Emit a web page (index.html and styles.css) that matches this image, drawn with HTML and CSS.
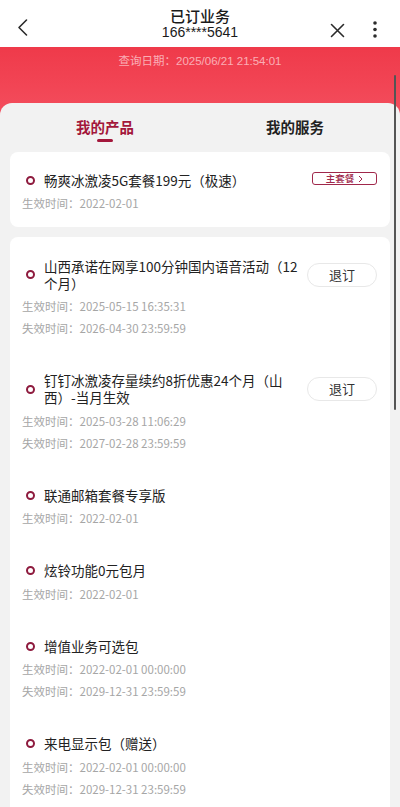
FILE: index.html
```html
<!DOCTYPE html>
<html lang="zh-CN">
<head>
<meta charset="utf-8">
<title>已订业务</title>
<link rel="stylesheet" href="styles.css">
</head>
<body>
<div class="app">
  <header class="nav">
    <div class="nav-left">
      <svg width="80" height="47" viewBox="0 0 80 47"><polyline points="26.5,20 19,27.5 26.5,35" fill="none" stroke="#2b2b2b" stroke-width="1.6" stroke-linecap="round" stroke-linejoin="round"/></svg>
    </div>
    <div class="nav-center">
      <div class="nav-title">已订业务</div>
      <div class="nav-phone">166****5641</div>
    </div>
    <div class="nav-right">
      <svg width="80" height="47" viewBox="0 0 80 47"><path d="M11.5 24.5 L23.5 36.5 M23.5 24.5 L11.5 36.5" stroke="#2b2b2b" stroke-width="1.6" stroke-linecap="round"/><circle cx="55" cy="23" r="1.8" fill="#2b2b2b"/><circle cx="55" cy="29.5" r="1.8" fill="#2b2b2b"/><circle cx="55" cy="36" r="1.8" fill="#2b2b2b"/></svg>
    </div>
  </header>

  <section class="hero">
    <div class="query-date">查询日期：2025/06/21 21:54:01</div>
    <div class="panel">
      <div class="tabs">
        <div class="tab active"><span class="tab-label">我的产品</span><span class="tab-bar"></span></div>
        <div class="tab"><span class="tab-label">我的服务</span></div>
      </div>

      <div class="card card-main">
        <div class="item">
          <div class="item-row">
            <span class="dot"></span>
            <span class="item-title">畅爽冰激凌5G套餐199元（极速）</span>
            <span class="tag">主套餐<svg width="5" height="8" viewBox="0 0 5 8"><polyline points="1,1 4,4 1,7" fill="none" stroke="#a0284b" stroke-width="1"/></svg></span>
          </div>
          <div class="dates"><div class="date">生效时间：2022-02-01</div></div>
        </div>
      </div>

      <div class="card card-list">
        <div class="item">
          <div class="item-row">
            <span class="dot"></span>
            <span class="item-title">山西承诺在网享100分钟国内语音活动（12个月）</span>
            <span class="btn">退订</span>
          </div>
          <div class="dates">
            <div class="date">生效时间：2025-05-15 16:35:31</div>
            <div class="date">失效时间：2026-04-30 23:59:59</div>
          </div>
        </div>
        <div class="item">
          <div class="item-row">
            <span class="dot"></span>
            <span class="item-title">钉钉冰激凌存量续约8折优惠24个月（山西）-当月生效</span>
            <span class="btn">退订</span>
          </div>
          <div class="dates">
            <div class="date">生效时间：2025-03-28 11:06:29</div>
            <div class="date">失效时间：2027-02-28 23:59:59</div>
          </div>
        </div>
        <div class="item">
          <div class="item-row">
            <span class="dot"></span>
            <span class="item-title">联通邮箱套餐专享版</span>
          </div>
          <div class="dates"><div class="date">生效时间：2022-02-01</div></div>
        </div>
        <div class="item">
          <div class="item-row">
            <span class="dot"></span>
            <span class="item-title">炫铃功能0元包月</span>
          </div>
          <div class="dates"><div class="date">生效时间：2022-02-01</div></div>
        </div>
        <div class="item">
          <div class="item-row">
            <span class="dot"></span>
            <span class="item-title">增值业务可选包</span>
          </div>
          <div class="dates">
            <div class="date">生效时间：2022-02-01 00:00:00</div>
            <div class="date">失效时间：2029-12-31 23:59:59</div>
          </div>
        </div>
        <div class="item">
          <div class="item-row">
            <span class="dot"></span>
            <span class="item-title">来电显示包（赠送）</span>
          </div>
          <div class="dates">
            <div class="date">生效时间：2022-02-01 00:00:00</div>
            <div class="date">失效时间：2029-12-31 23:59:59</div>
          </div>
        </div>
      </div>
    </div>
  </section>
  <div class="scroll-thumb"></div>
</div>
</body>
</html>
```

FILE: styles.css
```css
html, body {
  margin: 0;
  padding: 0;
  overflow: hidden;
  background: #f2f2f2;
}
body {
  font-family: "Noto Sans CJK SC", "Liberation Sans", sans-serif;
  color: #222;
  -webkit-font-smoothing: antialiased;
}
.app {
  position: relative;
  width: 400px;
  height: 807px;
  overflow: hidden;
}
.nav {
  display: flex;
  height: 47px;
  background: #fff;
}
.nav-left, .nav-right {
  width: 80px;
  flex: none;
}
.nav-left svg, .nav-right svg { display: block; }
.nav-center {
  flex: 1;
  text-align: center;
  padding-top: 7px;
}
.nav-title {
  font-size: 15px;
  line-height: 18px;
  font-weight: 500;
  color: #1a1a1a;
}
.nav-phone {
  font-family: "Liberation Sans", "Noto Sans CJK SC", sans-serif;
  font-size: 14px;
  line-height: 15px;
  color: #1a1a1a;
}
.hero {
  background: linear-gradient(180deg, #ef3a4a 0px, #f24555 40px, #f34f5e 70px) no-repeat;
  background-size: 100% 80px;
  padding-top: 7px;
}
.query-date {
  text-align: center;
  font-family: "Liberation Sans", "Noto Sans CJK SC", sans-serif;
  font-size: 11.5px;
  line-height: 14px;
  color: rgba(255, 225, 228, 0.7);
  margin-bottom: 35px;
}
.panel {
  background: #f2f2f2;
  border-radius: 12px 12px 0 0;
  padding-bottom: 40px;
}
.tabs {
  display: flex;
  margin: 0 10px;
  padding-top: 15px;
  height: 34px;
}
.tab {
  flex: 1;
  display: flex;
  flex-direction: column;
  align-items: center;
}
.tab-label {
  font-size: 14.5px;
  line-height: 18px;
  font-weight: 700;
  color: #222;
}
.tab.active .tab-label { color: #a3173b; }
.tab-bar {
  width: 16px;
  height: 3px;
  border-radius: 2px;
  background: #a3173b;
  margin-top: 3px;
}
.card {
  background: #fff;
  border-radius: 8px;
  margin: 0 10px;
  padding: 0 13px 0 12px;
}
.card-main {
  padding-top: 19.5px;
  padding-bottom: 13px;
  margin-bottom: 10px;
}
.card-list {
  padding-top: 20.5px;
  padding-bottom: 30px;
}
.item + .item { margin-top: 33px; }
.item-row {
  display: flex;
  align-items: center;
}
.dot {
  flex: none;
  width: 9px;
  height: 9px;
  box-sizing: border-box;
  border: 2.2px solid #8e1b3e;
  border-radius: 50%;
  margin: 0 9.5px 0 3.5px;
}
.item-title {
  flex: 1;
  font-size: 13.5px;
  line-height: 17px;
  color: #222;
}
.btn {
  flex: none;
  width: 70px;
  height: 24px;
  box-sizing: border-box;
  border: 1px solid #e8e8e8;
  border-radius: 12px;
  margin-left: 5px;
  font-size: 13px;
  line-height: 22px;
  text-align: center;
  color: #333;
}
.tag {
  flex: none;
  display: inline-flex;
  align-items: center;
  justify-content: center;
  gap: 4px;
  width: 65px;
  height: 13px;
  box-sizing: border-box;
  border: 1px solid #a0284b;
  border-radius: 3px;
  font-size: 9.5px;
  line-height: 11px;
  font-weight: 500;
  color: #a0284b;
  margin-top: -3px;
}
.tag svg { display: block; }
.dates { margin-top: 3.5px; }
.date {
  font-size: 11.5px;
  line-height: 22px;
  color: #a6a6a6;
}
.scroll-thumb {
  position: absolute;
  left: 393.5px;
  top: 75px;
  width: 2.5px;
  height: 335px;
  border-radius: 2px;
  background: #555;
}
```
